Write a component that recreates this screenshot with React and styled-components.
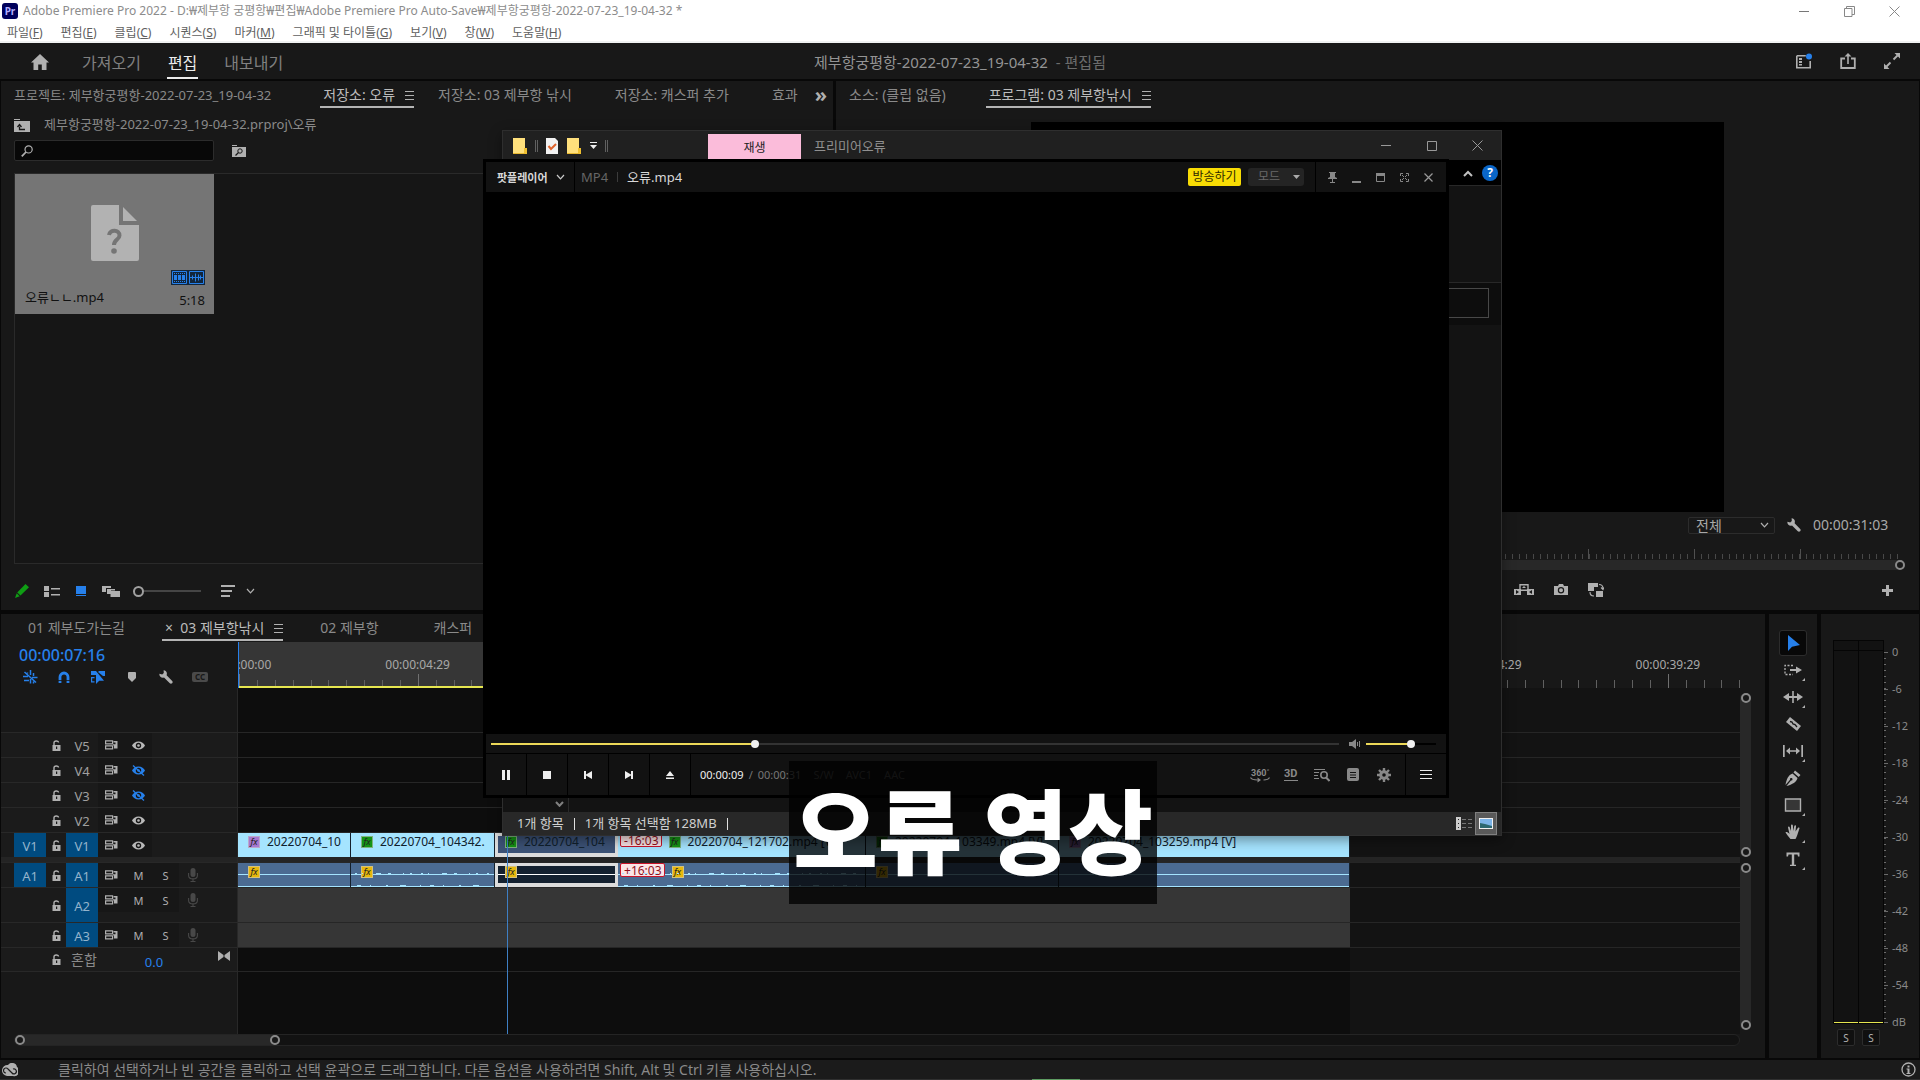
import React from 'react'
import styled, { createGlobalStyle, css } from 'styled-components'

const GlobalStyle = createGlobalStyle`
    * { box-sizing: border-box; }
    html, body { margin: 0; height: 100%; background: #080808; }
    #root { height: 100%; }
    body, button, input, select {
        font-family: "Noto Sans", "Noto Sans CJK KR", sans-serif;
    }
    button {
        margin: 0;
        padding: 0;
        border: 0;
        background: none;
        color: inherit;
        font-size: inherit;
    }
    h1, h2, p { margin: 0; font-weight: 400; }
    svg { display: block; flex: none; }
`

const Svg = ({ w = 16, h = 16, color = '#b0b0b0', children }) => (
    <svg width={w} height={h} viewBox={`0 0 ${w} ${h}`} fill={color} stroke="none" aria-hidden="true">
        {children}
    </svg>
)

/* ---------- icons ---------- */
const HomeIcon = () => (
    <Svg w={18} h={16}><path d="M9 0 0 8.5h2.5V16h4.7v-5.5h3.6V16h4.7V8.5H18z" /></Svg>
)
const WorkspaceIcon = () => (
    <Svg w={16} h={16}>
        <path d="M.8 2.8h9M.8 2.8v12h13.4V8" fill="none" stroke="#b0b0b0" strokeWidth="1.6" />
        <path d="M3 5h3v2H3zm0 3h3v2H3zm0 3h3v1.5H3z" />
        <circle cx="13" cy="3.5" r="3" fill="#2680eb" />
    </Svg>
)
const ShareIcon = () => (
    <Svg w={16} h={16}>
        <path d="M5 5.5H1.2V15h13.6V5.5H11" fill="none" stroke="#b0b0b0" strokeWidth="1.8" />
        <path d="M8 0l3.5 3.6H8.8V11H7.2V3.6H4.5z" />
    </Svg>
)
const FullIcon = () => (
    <Svg w={16} h={16}>
        <path d="M16 0v5.5L10.5 0zM0 16v-5.5L5.5 16z" />
        <path d="M13.5 2.5 9.5 6.5M6.5 9.5l-4 4" stroke="#b0b0b0" strokeWidth="1.8" />
    </Svg>
)
const MenuLines = () => (
    <Svg w={9} h={9}><path d="M0 0h9v1H0zm0 4h9v1H0zm0 4h9v1H0z" /></Svg>
)
const FolderUpIcon = () => (
    <Svg w={16} h={13}>
        <path d="M0 0h6v1H0zM0 2h16v11H0z" />
        <path d="M5.5 7.5V10.5H11M3.5 8 5.5 5.5 7.5 8" fill="none" stroke="#181818" strokeWidth="1.3" />
    </Svg>
)
const FolderFindIcon = () => (
    <Svg w={14} h={12}>
        <path d="M0 0h5v1H0zM0 2h14v10H0z" />
        <circle cx="8" cy="6" r="2.2" fill="none" stroke="#181818" />
        <path d="M6.5 7.5 3.5 10.5" stroke="#181818" strokeWidth="1.3" />
    </Svg>
)
const SearchIcon = () => (
    <Svg w={12} h={12}>
        <circle cx="7.6" cy="4.4" r="3.6" fill="none" stroke="#b0b0b0" strokeWidth="1.2" />
        <path d="M5 7 .8 11.4" stroke="#b0b0b0" strokeWidth="1.8" />
    </Svg>
)
const MissingFile = () => (
    <Svg w={48} h={56} color="#b2b2b2">
        <path d="M2 0h26v20h20v34a2 2 0 0 1-2 2H2a2 2 0 0 1-2-2V2a2 2 0 0 1 2-2z" />
        <path d="M32 2v14h14z" />
        <path d="M18 30c1-6 10.500-5.500 10.500.5 0 4.200-5.500 4-5.500 9.500" fill="none" stroke="#757575" strokeWidth="4" />
        <circle cx="23" cy="46" r="2.8" fill="#757575" />
    </Svg>
)
const FilmBadge = () => (
    <Svg w={17} h={15}>
        <path d="M0 0h17v15H0z" fill="#12263c" />
        <path d="M1.5 1.5h14v12h-14z" fill="none" stroke="#2680eb" />
        <path d="M3 5h3v5H3zm4 0h3v5H7zm4 0h3v5h-3z" fill="#2680eb" />
        <path d="M3 3.5h11M3 11.5h11" stroke="#2680eb" strokeDasharray="1 1" />
    </Svg>
)
const WaveBadge = () => (
    <Svg w={17} h={15}>
        <path d="M0 0h17v15H0z" fill="#12263c" />
        <path d="M1.5 1.5h14v12h-14z" fill="none" stroke="#2680eb" />
        <path d="M2 7.500h13M4.5 5.5v4M7.5 3.5v8M10.5 4.5v6M12.5 5.5v4" stroke="#2680eb" />
    </Svg>
)
const PencilIcon = () => (
    <Svg w={14} h={14} color="#0f9d14">
        <path d="M10.5 0 14 3.2 5.5 11.5 2.2 8.5zM1.7 9.3l3 3L0 14z" />
    </Svg>
)
const ListIcon = () => (
    <Svg w={16} h={11}><path d="M0 0h5v5H0zm0 6h5v5H0zM7 2h9v1.500H7zm0 6h9v1.500H7z" /></Svg>
)
const IconViewIcon = () => (
    <Svg w={12} h={11} color="#2680eb"><path d="M1 0h10v8H1zm0 9h10v1H1z" /></Svg>
)
const FreeformIcon = () => (
    <Svg w={18} h={11}>
        <path d="M0 0h9v2H4v4H0z" /><path d="M5 3h8v1.5H9V8H5z" /><path d="M8.5 5H18v6H8.5z" />
    </Svg>
)
const SortIcon = () => (
    <Svg w={14} h={12}><path d="M0 0h14v2H0zm0 5h11v2H0zm0 5h9v2H0z" /></Svg>
)
const Chevron = ({ color = '#b0b0b0', w = 9, sw = 1.2 }) => (
    <Svg w={w} h={6}><path d={`M1 1 ${w / 2} 4.8 ${w - 1} 1`} fill="none" stroke={color} strokeWidth={sw} /></Svg>
)
const WrenchIcon = () => (
    <Svg w={14} h={14}>
        <path d="M4.6.3 4.8 3 3.2 4.4.4 3.8C0 6.5 2.6 8.5 5 7.6L10.8 13.3c1.6 1.5 3.8-.8 2.4-2.3L7.6 5.2C8.6 2.5 7 .3 4.6.3z" />
    </Svg>
)
const NestIcon = () => (
    <Svg w={15} h={14} color="#2680eb">
        <path d="M1.500 2 13 12.500M0 6.500h5M9 7.500h5.500M1 10.500h5M7.5 0v5M4.500 2.500v1M10.5 3v3M7.5 9v4.500M10.500 11.500v2" fill="none" stroke="#2680eb" strokeWidth="1.500" />
    </Svg>
)
const SnapIcon = () => (
    <Svg w={12} h={12}>
        <path d="M2 12V6a4 4 0 0 1 8 0v6" fill="none" stroke="#2680eb" strokeWidth="2.800" />
        <path d="M0 9.500h4M8 9.500h4" stroke="#181818" strokeWidth=".8" />
    </Svg>
)
const LinkSelIcon = () => (
    <Svg w={15} h={13} color="#2680eb">
        <path d="M0 0h5v4H0zM8 0h6v5h-2L7 1zM0 6h3.500v1.200H1.200v3h2.300v1.200H0z" /><path d="M5 0v13l3.2-3.200H13z" />
    </Svg>
)
const MarkerIcon = () => (
    <Svg w={8} h={10}><path d="M0 1a1 1 0 0 1 1-1h6a1 1 0 0 1 1 1v5L4 10 0 6z" /></Svg>
)
const LockIcon = () => (
    <Svg w={9} h={11}>
        <path d="M2 5V2.800C2 .6 6.500.4 6.500 2.500" fill="none" stroke="#b0b0b0" strokeWidth="1.400" />
        <path d="M.5 5h8v6h-8z" /><path d="M4 6.500h1.200V9H4z" fill="#181818" />
    </Svg>
)
const SyncIcon = () => (
    <Svg w={13} h={10}>
        <path d="M.6.900h7v2.900h-7zM.6 5.900h7v2.900h-7z" fill="none" stroke="#b0b0b0" strokeWidth="1.200" />
        <path fillRule="evenodd" d="M8.500 1H12.500V8.500H9V5.500H8V4.300h2.500V2.500h-2z" />
    </Svg>
)
const EyeIcon = ({ off }) => {
    const c = off ? '#2680eb' : '#b8b8b8'
    return (
        <Svg w={13} h={11} color={c}>
            <path fillRule="evenodd" d="M6.5 1.5C3.5 1.5 1 3.5 0 5.5c1 2 3.5 4 6.5 4s5.5-2 6.5-4c-1-2-3.5-4-6.5-4zm0 1.3a2.7 2.7 0 1 1 0 5.4 2.7 2.7 0 0 1 0-5.4z" />
            <circle cx="6.5" cy="5.5" r="1.3" />
            {off && <path d="M1 .5l11 10" stroke={c} strokeWidth="1.3" />}
        </Svg>
    )
}
const MicIcon = () => (
    <Svg w={10} h={14} color="#484848">
        <rect x="2.5" y="0" width="5" height="9" rx="2.5" />
        <path d="M.6 5v2.5c0 4.5 8.8 4.500 8.800 0V5M5 11v2.500M2.500 13.500h5" fill="none" stroke="#484848" strokeWidth="1.100" />
    </Svg>
)
const KeyIcon = () => (
    <Svg w={12} h={10}><path d="M0 0l5.500 4v2L0 10zM12 0 6.500 4v2L12 10z" /></Svg>
)
const ExtractIcon = () => (
    <Svg w={20} h={12}>
        <path d="M6 5.500V.7h8v4.800" fill="none" stroke="#b0b0b0" strokeWidth="1.400" />
        <path d="M10 2l2 2H8zM7 5.500h6V7H7z" />
        <path fillRule="evenodd" d="M0 5h7v6H0zM2 6l3 2-3 2zM13 5h7v6h-7zM18 6l-3 2 3 2z" />
    </Svg>
)
const CameraIcon = () => (
    <Svg w={14} h={12}>
        <path fillRule="evenodd" d="M0 2h4l1-2h4l1 2h4v9H0zM7 3a3.200 3.200 0 1 0 0 6.400A3.200 3.200 0 0 0 7 3zm0 1.200a2 2 0 1 1 0 4 2 2 0 0 1 0-4z" />
    </Svg>
)
const CompareIcon = () => (
    <Svg w={16} h={14}>
        <path d="M0 0h10v4H6v4H0zM8 8h7v6H8z" />
        <path d="M11 1.500c3 0 4 1.500 4 4M13 4.500l2 2 1-2M6 13c-3 0-4-1-4-4" fill="none" stroke="#b0b0b0" strokeWidth="1.100" />
    </Svg>
)
const PlusIcon = () => <Svg w={11} h={11}><path d="M4 0h3v4h4v3H7v4H4V7H0V4h4z" /></Svg>

const toolDrawings = {
    '선택 도구': <path d="M5 2v16l4-4.200L17 12z" fill="#2680eb" />,
    '앞으로 트랙 선택': <><path d="M10 5.500H2v9h8" fill="none" stroke="#b0b0b0" strokeWidth="1.300" strokeDasharray="2 1.500" /><path d="M7 9h6V6.500l6 3.500-6 3.500V11H7z" /></>,
    '잔물결 편집': <><path d="M9.200 4h1.600v12H9.200zM0 10l6-4v3h8V6l6 4-6 4v-3H6v3z" /></>,
    '자르기 도구': <><path d="M7 3 18 12l-4 5L3 8z" /><path d="M7 7.500l2 .5 1 2 2 .5 2 2.500" fill="none" stroke="#181818" strokeWidth="1.300" /></>,
    '밀어넣기': <><path d="M0 4h1.700v12H0zM18.300 4H20v12h-1.700z" /><path d="M3 10l4-3.500V9.200h6V6.500l4 3.500-4 3.500v-2.700H7v2.700z" /></>,
    '펜 도구': <><path d="M12 2.500 17.500 7l-1.800 2L10.500 4.500zM9.500 5.500l5 4.500c-1 4-5 6.500-11 8L8 12.500a1.300 1.300 0 1 0-1-.8L2.500 17C3.500 11 5.500 7 9.500 5.500z" /></>,
    '사각형 도구': <path d="M2.500 4h15v12h-15z" fill="#363636" stroke="#b0b0b0" strokeWidth="1.400" />,
    '손 도구': <path d="M7.500 17C5.500 14.500 3.500 12 2.500 10.500c.8-1 2-.5 4 1.500L5 5.500c0-1.300 1.500-1.300 1.800 0L8 9V3.500c0-1.500 1.700-1.500 1.900 0L10.200 9l1.100-5c.4-1.200 1.900-1 1.700.4L12.500 9.500 14.800 6c.8-1 2-.3 1.600.8-.9 2.200-1.900 6.200-2.900 8.200L12.500 17z" />,
    '문자 도구': <path d="M3.500 3.500h13v4H15l-.5-2h-3.300v10.300H13V17H7v-1.200h1.800V5.500H5.500l-.5 2H3.500z" />,
}

/* ---------- shell ---------- */
const Shell = styled.div`
    position: relative;
    display: flex;
    flex-direction: column;
    height: 100vh;
    overflow: hidden;
    background: #080808;
    color: #8a8a8a;
    font-size: 14px;
    line-height: 20px;
    white-space: nowrap;
    cursor: default;
`
const TitleArea = styled.header`
    border-bottom: 2px solid #f0f2f2;
    background: #fff;
    color: #8c8c8c;
    font-size: 12px;
`
const TitleRow = styled.div`
    display: flex;
    align-items: center;
    justify-content: space-between;
    height: 22px;
    padding: 0 20px 0 2px;
`
const AppTitle = styled.div`
    display: flex;
    align-items: center;
    gap: 5px;
`
const PrBadge = styled.span`
    display: grid;
    place-items: center;
    width: 16px;
    height: 16px;
    border-radius: 3px;
    background: #00005b;
    color: #b3b0ff;
    font-size: 10px;
    font-weight: 700;
    line-height: 16px;
`
const WindowButtons = styled.div`
    display: flex;
    align-items: center;
    gap: ${p => p.$gap || 34}px;
`
const MenuBar = styled.nav`
    display: flex;
    gap: 18px;
    height: 19px;
    padding-left: 7px;
    color: #606060;
    line-height: 22px;
`
const HeaderBar = styled.div`
    display: grid;
    grid-template-columns: 1fr auto 1fr;
    align-items: stretch;
    height: 38px;
    padding: 0 20px;
    border-bottom: 2px solid #080808;
    background: #181818;
`
const ModeTabs = styled.div`
    display: flex;
    align-items: stretch;
    gap: 25px;
`
const HomeButton = styled.button`
    margin: 2px 7px 0 11px;
`
const ModeTab = styled.button`
    padding: 3px 1px 0;
    border-bottom: 2px solid ${p => (p.$on ? '#ececec' : 'transparent')};
    color: ${p => (p.$on ? '#ececec' : '#808080')};
    font-size: 16px;
`
const DocName = styled.h1`
    display: flex;
    align-items: center;
    gap: 8px;
    padding-top: 2px;
    font-size: 15px;
    color: #949494;
    span { color: #6c6c6c; }
`
const HeaderTools = styled.div`
    display: flex;
    align-items: center;
    justify-content: flex-end;
    gap: 28px;
`
const Work = styled.main`
    flex: 1;
    min-height: 0;
    display: grid;
    grid-template-rows: minmax(0, 529fr) minmax(0, 444fr);
    gap: 4px;
    padding: 0 1px;
`
const TopRow = styled.div`
    display: grid;
    grid-template-columns: minmax(0, 832fr) minmax(0, 1083fr);
    gap: 3px;
    min-height: 0;
`
const BottomRow = styled.div`
    display: grid;
    grid-template-columns: minmax(0, 1fr) 48px 98px;
    gap: 4px;
    min-height: 0;
`
const Panel = styled.section`
    display: flex;
    flex-direction: column;
    min-width: 0;
    min-height: 0;
    overflow: hidden;
    background: #181818;
`
const TabStrip = styled.div`
    display: flex;
    flex: none;
    align-items: stretch;
    gap: ${p => p.$gap || 40}px;
    height: 27px;
    padding-left: ${p => p.$pad || 13}px;
`
const Tab = styled.button`
    display: flex;
    align-items: center;
    gap: 10px;
    margin-left: ${p => p.$shift || 0}px;
    padding: 3px ${p => (p.$compact ? 6 : 0)}px 0 ${p => (p.$on ? 3 : 0)}px;
    border-bottom: 2px solid ${p => (p.$on ? '#b4b4b4' : 'transparent')};
    color: ${p => (p.$on ? '#bcbcbc' : '#8a8a8a')};
    font-size: ${p => (p.$compact ? 13 : 14)}px;
    line-height: 22px;
`
const More = styled.button`
    margin-left: -26px;
    font-size: 20px;
    font-weight: 700;
    line-height: 16px;
    color: #b0b0b0;
`

/* ---------- project panel ---------- */
const Crumb = styled.div`
    display: flex;
    align-items: center;
    gap: 14px;
    height: 32px;
    padding: 0 13px;
    font-size: 13px;
    > svg { margin-top: 3px; }
`
const SearchRow = styled.div`
    display: flex;
    align-items: center;
    gap: 18px;
    padding: 0 13px;
`
const SearchBox = styled.label`
    display: flex;
    align-items: center;
    gap: 6px;
    width: 200px;
    height: 21px;
    padding-left: 6px;
    border: 1px solid #2c2c2c;
    border-radius: 2px;
    background: #080808;
    input {
        min-width: 0;
        flex: 1;
        border: 0;
        outline: 0;
        background: none;
        color: #b0b0b0;
    }
`
const Bin = styled.div`
    flex: 1;
    margin: 12px 0 0 13px;
    border: 1px solid #2a2a2a;
    border-right: 0;
    background: #161616;
`
const Asset = styled.figure`
    display: flex;
    flex-direction: column;
    justify-content: space-between;
    width: 199px;
    height: 140px;
    margin: 0;
    padding: 31px 9px 5px 9px;
    background: #757575;
    color: #111;
    font-size: 13px;
    > svg { align-self: center; }
`
const AssetInfo = styled.figcaption`
    display: flex;
    align-items: flex-end;
    justify-content: space-between;
    > span { padding: 0 0 2px 1px; }
`
const AssetMeta = styled.div`
    display: flex;
    flex-direction: column;
    align-items: flex-end;
    gap: 6px;
    line-height: 18px;
    div { display: flex; }
`
const BinTools = styled.div`
    display: flex;
    align-items: center;
    gap: 15px;
    height: 46px;
    padding: 8px 0 0 14px;
`
const SortButton = styled.button`
    display: flex;
    align-items: center;
    gap: 11px;
`
const Zoom = styled.input`
    appearance: none;
    width: 68px;
    height: 12px;
    margin: 0 5px 0 -2px;
    background: linear-gradient(#454545, #454545) center / 100% 2px no-repeat;
    &::-webkit-slider-thumb {
        appearance: none;
        width: 11px;
        height: 11px;
        border: 2px solid #a0a0a0;
        border-radius: 50%;
        background: #181818;
    }
`

/* ---------- program monitor ---------- */
const Stage = styled.div`
    flex: 1;
    min-height: 0;
    display: flex;
    justify-content: center;
    padding-top: 14px;
`
const Screen = styled.div`
    height: 100%;
    aspect-ratio: 16 / 9;
    background: #000;
`
const MonitorInfo = styled.div`
    display: flex;
    align-items: center;
    justify-content: flex-end;
    gap: 12px;
    height: 26px;
    padding-right: 30px;
    color: #a8a8a8;
    time { width: 76px; }
`
const ZoomSelect = styled.div`
    display: flex;
    align-items: center;
    width: 87px;
    height: 17px;
    padding-right: 5px;
    border: 1px solid #2c2c2c;
    border-radius: 2px;
    select {
        appearance: none;
        flex: 1;
        border: 0;
        padding: 0 0 0 7px;
        background: none;
        color: #a8a8a8;
        font-size: 14px;
        line-height: 15px;
    }
`
const MiniRuler = styled.div`
    height: 12px;
    margin: 9px 19px 0 16px;
    background:
        linear-gradient(90deg, #505050 1px, transparent 1px) 100px 100% / 106px 10px repeat-x,
        linear-gradient(90deg, #484848 1px, transparent 1px) 2px 100% / 7px 5px repeat-x;
`
const ScrollTrack = styled.div`
    display: flex;
    align-items: center;
    justify-content: space-between;
    flex-direction: ${p => (p.$vertical ? 'column' : 'row')};
    border-radius: 6px;
    background: #282828;
`
const MonitorScroll = styled(ScrollTrack)`
    height: 10px;
    margin: 1px 14px 0 16px;
`
const Knob = styled.i`
    flex: none;
    width: 10px;
    height: 10px;
    border: 2px solid #8a8a8a;
    border-radius: 50%;
    background: #181818;
`
const MonitorTools = styled.div`
    display: flex;
    align-items: center;
    justify-content: flex-end;
    gap: 20px;
    height: 40px;
    padding-right: 26px;
    button:last-child { margin-left: 258px; }
`

/* ---------- timeline ---------- */
const SequenceBody = styled.div`
    flex: 1;
    min-height: 0;
    display: grid;
    grid-template-columns: 237px minmax(0, 1fr) 12px 13px;
    grid-template-rows: 47px minmax(0, 1fr) 12px;
    padding-bottom: 12px;
`
const SequenceHead = styled.div`
    padding-left: 18px;
`
const Timecode = styled.div`
    height: 26px;
    color: #2680eb;
    font-size: 16px;
    font-weight: 500;
    line-height: 28px;
`
const HeadTools = styled.div`
    display: grid;
    grid-template-columns: repeat(6, 34px);
    align-items: center;
    margin-left: -6px;
    height: 20px;
    button { display: grid; place-items: center; }
`
const CcIcon = styled.span`
    width: 16px;
    border-radius: 2px;
    background: #4a4a4a;
    color: #181818;
    font-size: 8px;
    font-weight: 700;
    line-height: 10px;
`
const Ruler = styled.div`
    position: relative;
    display: flex;
    overflow: hidden;
    margin-top: 1px;
    border-left: 1px solid #2680eb;
    background: linear-gradient(#363636, #363636) 0 0 / 1111px 100% no-repeat;
    &::after {
        content: '';
        position: absolute;
        inset: auto auto 0 0;
        width: 1111px;
        height: 2px;
        background: #e6e650;
    }
`
const Major = styled.div`
    flex: 0 0 11.9%;
    background:
        linear-gradient(#707070, #707070) 0 100% / 1px 14px no-repeat,
        repeating-linear-gradient(90deg, #606060 0 1px, transparent 1px 10%) 0 100% / 100% 8px no-repeat;
    span {
        display: block;
        width: max-content;
        margin-top: 13px;
        transform: translateX(-50%);
        color: #a8a8a8;
        font-size: 12px;
    }
`
const TrackHeads = styled.div`
    padding-top: 44px;
    border-right: 1px solid #282828;
    overflow: hidden;
`
const TrackHead = styled.div`
    display: grid;
    grid-template-columns: 32px 20px 32px 27px 27px 27px 27px 1fr;
    align-items: start;
    height: ${p => p.$h || 25}px;
    padding-left: 13px;
    border-top: 1px solid #282828;
    background: #1b1b1b;
    font-size: 12px;
    color: #a0a0a0;
    > * { height: 24px; }
`
const Center = styled.div`
    display: grid;
    place-items: center;
    ${p => p.$fill && css`height: 100% !important;`}
`
const Patch = styled.button`
    height: 100% !important;
    padding-top: 2px;
    ${p => p.$on && css`background: #004b80; color: #94b4cc;`}
    font-size: 13px;
`
const Flat = styled.button`
    display: grid;
    place-items: center;
    background: #171717;
    color: #b0b0b0;
    font-size: 11px;
`
const Splitter = styled.div`
    height: 5px;
    background: #242424;
`
const MixHead = styled.div`
    display: flex;
    align-items: center;
    height: 25px;
    padding: 0 7px 0 51px;
    border-top: 1px solid #282828;
    border-bottom: 1px solid #282828;
    background: #1b1b1b;
    gap: 10px;
    output { margin: 4px 0 0 38px; color: #2680eb; font-size: 13px; }
    > svg:last-child { margin: -8px 0 0 auto; }
`
const Lanes = styled.div`
    position: relative;
    overflow: hidden;
    padding-top: 44px;
    background: linear-gradient(#0d0d0d, #0d0d0d) 0 0 / 1112px 100% no-repeat #131313;
`
const Lane = styled.div`
    display: flex;
    height: ${p => p.$h || 25}px;
    border-top: 1px solid #262626;
    ${p => p.$filled && css`background: linear-gradient(#363636, #363636) 0 0 / 1112px 100% no-repeat;`}
    ${p => p.$last && css`border-bottom: 1px solid #262626;`}
`
const Clip = styled.div`
    position: relative;
    display: flex;
    align-items: flex-start;
    gap: 7px;
    flex: none;
    overflow: hidden;
    height: 24px;
    padding: 3px 2px 0 10px;
    border-right: 1px solid #14202c;
    background: ${p => (p.$audio ? '#4b6b92' : '#a5e4ff')};
    color: #10202c;
    font-size: 12px;
    line-height: 12px;
    ${p => p.$audio && css`
        background: linear-gradient(#a5e4ff, #a5e4ff) 0 11px / 100% 1px no-repeat,
            linear-gradient(#a5e4ff, #a5e4ff) 0 100% / 100% 1px no-repeat, #4b6b92;
    `}
    ${p => p.$selected && css`
        padding: 0 1px 0 7px;
        border: solid #dcdcdc;
        border-width: 3px 3px 4px;
        background: ${p.$audio ? 'linear-gradient(#fff, #fff) 0 8px / 100% 1px no-repeat, #142130' : '#3c5276'};
    `}
    > svg:last-child { position: absolute; left: 0; bottom: 0; }
`
const Fx = styled.span`
    flex: none;
    width: 12px;
    height: 12px;
    border: 1px solid rgba(200, 200, 200, 0.6);
    background: ${p => p.$color};
    color: #222;
    font-size: 9px;
    font-style: italic;
    line-height: 10px;
    text-align: center;
`
const Drift = styled.span`
    height: 14px;
    margin: -3px 0 0 -8px;
    padding: 0 2px 0 3px;
    border: 1px solid #c8142a;
    border-radius: 2px;
    background: #fbe4e6;
    color: #90101c;
    line-height: 14px;
`
const Playhead = styled.div`
    position: absolute;
    top: 0;
    bottom: 0;
    left: 269px;
    width: 1px;
    background: #3e7fc4;
`
const VScrolls = styled.div`
    display: flex;
    flex-direction: column;
    gap: 6px;
    padding: 5px 0 4px;
`
const VScroll = styled(ScrollTrack)`
    width: 11px;
    height: ${p => p.$h}px;
    flex: ${p => (p.$h ? 'none' : 1)};
`
const HScroll = styled.div`
    grid-column: 1 / 3;
    height: 12px;
    margin-left: 13px;
    border: 1px solid #242424;
    border-radius: 6px;
    background: #121212;
`
const HThumb = styled(ScrollTrack)`
    width: 265px;
    height: 10px;
`

/* ---------- tools & meters ---------- */
const Tools = styled(Panel)`
    align-items: center;
    gap: 1px;
    padding-top: 16px;
`
const Tool = styled.button`
    position: relative;
    display: grid;
    place-items: center;
    width: 28px;
    height: 26px;
    border-radius: 3px;
    ${p => p.$on && css`background: #080808; box-shadow: inset 0 0 0 1px #2c2c2c;`}
    ${p => p.$more && css`
        &::after {
            content: '';
            position: absolute;
            right: 2px;
            bottom: 2px;
            border-left: 3px solid transparent;
            border-bottom: 3px solid #b0b0b0;
        }
    `}
`
const MeterPanel = styled(Panel)`
    padding: 26px 0 12px 12px;
    font-size: 11px;
`
const MeterBody = styled.div`
    flex: 1;
    display: flex;
`
const Bars = styled.div`
    display: grid;
    grid-template-columns: 1fr 1fr;
    grid-template-rows: 9px 1fr;
    gap: 1px;
    width: 51px;
    padding: 1px;
    background: #050505;
    i { background: #121212; }
    i:nth-child(n + 3) { border-bottom: 1px solid #e6e650; }
`
const Scale = styled.ol`
    display: flex;
    flex-direction: column;
    justify-content: space-between;
    flex: 1;
    margin: 3px 0 -7px;
    padding: 0;
    list-style: none;
    color: #8a8a8a;
    background: repeating-linear-gradient(#6a6a6a 0 1px, transparent 1px 6px) 0 9px / 2px calc(100% - 18px) no-repeat;
    li {
        display: flex;
        align-items: center;
        gap: 4px;
        height: 18px;
    }
    li::before { content: ''; width: 4px; height: 1px; background: #6a6a6a; }
`
const Solos = styled.div`
    display: flex;
    gap: 7px;
    margin: 5px 0 0 4px;
    button {
        width: 18px;
        height: 17px;
        border: 1px solid #2c2c2c;
        border-radius: 2px;
        background: #101010;
        color: #b0b0b0;
        font-size: 10px;
        line-height: 14px;
    }
`
const StatusBar = styled.footer`
    display: flex;
    align-items: center;
    justify-content: space-between;
    height: 20px;
    margin-top: 2px;
    padding: 0 4px 0 2px;
    border-bottom: 1px solid #303030;
    background: #1b1b1b;
    div { display: flex; align-items: center; gap: 40px; }
`

/* ---------- floating windows ---------- */
const ExplorerWindow = styled.section`
    position: absolute;
    left: 502px;
    top: 130px;
    display: flex;
    flex-direction: column;
    width: 1000px;
    height: 706px;
    border: 1px solid #2e2e2e;
    background: #131313;
    box-shadow: 0 4px 12px rgba(0, 0, 0, 0.4);
    color: #d0d0d0;
    font-size: 13px;
`
const ExplorerTitle = styled.header`
    display: grid;
    grid-template-columns: 195px 93px 1fr auto;
    align-items: center;
    height: 29px;
    padding-left: 10px;
    background: #202020;
    color: #909090;
    h2 { padding-left: 13px; font-size: 13px; }
    ${WindowButtons} { padding-right: 18px; }
`
const QuickTools = styled.div`
    display: flex;
    align-items: center;
    gap: 9px;
`
const QuickSep = styled.i`
    width: 3px;
    height: 12px;
    margin: 0 -1px;
    border: solid #606060;
    border-width: 0 1px;
`
const PlayTab = styled.button`
    align-self: end;
    height: 26px;
    background: #fbbcda;
    color: #222;
    font-size: 12px;
`
const RibbonTabs = styled.div`
    display: flex;
    align-items: center;
    justify-content: flex-end;
    gap: 8px;
    height: 26px;
    padding-right: 3px;
    border-bottom: 1px solid #282828;
    background: #000;
`
const HelpButton = styled.button`
    width: 16px;
    height: 16px;
    border-radius: 50%;
    background: #0a66c8;
    color: #fff;
    font-size: 12px;
    font-weight: 700;
    line-height: 16px;
`
const Ribbon = styled.div`
    height: 97px;
    border-bottom: 1px solid #282828;
`
const AddressRow = styled.div`
    height: 42px;
    padding: 5px 12px 7px;
    background: #0d0d0d;
    input {
        display: block;
        width: 100%;
        height: 30px;
        border: 1px solid #484848;
        background: #0d0d0d;
    }
`
const ExplorerBody = styled.div`
    flex: 1;
    display: flex;
    align-items: flex-end;
    justify-content: flex-end;
    width: 66px;
    padding: 0 4px 5px 0;
    border-right: 1px solid #2a2a2a;
`
const ExplorerStatus = styled.footer`
    display: flex;
    align-items: center;
    gap: 10px;
    height: 23px;
    padding: 0 4px 0 14px;
    background: #282828;
    line-height: 18px;
    > span { height: 20px; }
    > i { width: 1px; height: 12px; background: #e0e0e0; }
`
const ViewSwitch = styled.div`
    display: flex;
    align-items: center;
    gap: 3px;
    margin-left: auto;
    button:last-child {
        display: grid;
        place-items: center;
        width: 22px;
        height: 23px;
        border: 1px solid #808080;
        background: #5a5a5a;
    }
`
const PlayerWindow = styled.section`
    position: absolute;
    left: 483px;
    top: 159px;
    display: flex;
    flex-direction: column;
    width: 966px;
    height: 639px;
    border: 3px solid #000;
    background: #000;
    color: #d8d8d8;
    font-size: 13px;
`
const PlayerTitle = styled.header`
    display: flex;
    align-items: center;
    height: 30px;
    background: #121212;
`
const PlayerMenu = styled.button`
    display: flex;
    align-items: center;
    justify-content: space-between;
    width: 89px;
    height: 30px;
    padding: 0 9px 0 11px;
    border-right: 1px solid #000;
    font-size: 11px;
    font-weight: 700;
`
const FileName = styled.div`
    display: flex;
    align-items: center;
    gap: 9px;
    flex: 1;
    padding-left: 6px;
    span { color: #666; }
    i { width: 1px; height: 10px; background: #3c3c3c; }
`
const LiveButton = styled.button`
    width: 53px;
    height: 18px;
    border-radius: 2px;
    background: #f8dc04;
    color: #2c2800;
    font-size: 12px;
    line-height: 18px;
`
const ModeSelect = styled.label`
    display: flex;
    align-items: center;
    width: 56px;
    height: 18px;
    margin: 0 11px 0 7px;
    padding-right: 4px;
    border-radius: 3px;
    background: #242424;
    select {
        appearance: none;
        flex: 1;
        min-width: 0;
        padding: 0 0 0 10px;
        border: 0;
        background: none;
        color: #6a6a6a;
        font-size: 12px;
        line-height: 18px;
    }
`
const PlayerButtons = styled.div`
    display: flex;
    align-items: center;
    justify-content: space-between;
    width: 131px;
    height: 30px;
    padding: 0 13px 0 12px;
    border-left: 1px solid #000;
`
const Video = styled.div`
    flex: 1;
    background: #000;
`
const SeekRow = styled.div`
    display: flex;
    align-items: center;
    height: 20px;
    padding: 0 10px 0 5px;
    border-bottom: 1px solid #000;
    background: #121212;
    svg { margin: 0 6px 0 10px; }
`
const Slider = styled.input`
    appearance: none;
    height: 10px;
    margin: 0;
    min-width: 0;
    flex: ${p => (p.$w ? `0 0 ${p.$w}px` : 1)};
    background: linear-gradient(90deg, #ecd858 ${p => p.value}%, ${p => p.$rest} ${p => p.value}%) center / 100% 2px no-repeat;
    &::-webkit-slider-thumb {
        appearance: none;
        width: 8px;
        height: 8px;
        border-radius: 50%;
        background: #f0f0f0;
    }
`
const Controls = styled.div`
    display: flex;
    align-items: center;
    height: 41px;
    background: #121212;
`
const ControlButton = styled.button`
    display: grid;
    place-items: center;
    width: 41px;
    height: 41px;
    border-right: 1px solid #000;
`
const PlayTime = styled.div`
    display: flex;
    flex: 1;
    gap: 5px;
    padding-left: 9px;
    font-size: 11px;
    color: #eee;
    span { color: #777; }
    small { margin-left: 7px; font-size: 11px; color: #555; }
`
const ExtraTools = styled.div`
    display: grid;
    grid-template-columns: repeat(5, 31px);
    place-items: center;
    padding-right: 6px;
`
const MenuButton = styled(ControlButton)`
    border-right: 0;
    border-left: 1px solid #000;
`
const Subtitle = styled.p`
    position: absolute;
    left: 789px;
    top: 761px;
    width: 368px;
    height: 143px;
    background: rgba(0, 0, 0, 0.78);
    color: #fff;
    font-family: "Noto Sans CJK KR", sans-serif;
    font-size: 92px;
    font-weight: 900;
    line-height: 132px;
    text-align: center;
`
const TaskbarPeek = styled.i`
    position: absolute;
    left: 1032px;
    bottom: 0;
    width: 48px;
    height: 1px;
    background: #5e9c62;
`

const MinIcon = ({ c = '#777' }) => <Svg w={11} h={11}><path d="M0 5.500h10" stroke={c} /></Svg>
const MaxIcon = () => <Svg w={10} h={10}><path d="M.5.5h9v9h-9z" fill="none" stroke="#999" /></Svg>
const CloseIcon = ({ c = '#888' }) => <Svg w={11} h={11}><path d="M.5.5l10 10M10.5.5l-10 10" stroke={c} fill="none" /></Svg>
const RestoreIcon = () => (
    <Svg w={11} h={11}><path d="M.5 2.500h7.500v8H.5zM2.500 2.500v-2h8v8H8" fill="none" stroke="#888" /></Svg>
)
const FolderIcon = () => (
    <Svg w={14} h={16}><path d="M0 0h12v16H0z" fill="#ffe07c" /><path d="M11 10h3v6h-3z" fill="#f0c030" /><path d="M0 15h12v1H0z" fill="#e8b830" /></Svg>
)
const DocIcon = () => (
    <Svg w={12} h={16}><path d="M0 0h9l3 3v13H0z" fill="#f2f2f2" /><path d="M2.500 8l2.500 3 5-5" fill="none" stroke="#e0642c" strokeWidth="2" /></Svg>
)

/* ---------- data ---------- */
const menus = [['파일', 'F'], ['편집', 'E'], ['클립', 'C'], ['시퀀스', 'S'], ['마커', 'M'], ['그래픽 및 타이틀', 'G'], ['보기', 'V'], ['창', 'W'], ['도움말', 'H']]

const videoTracks = [
    { name: 'V5' }, { name: 'V4', hidden: true }, { name: 'V3', hidden: true }, { name: 'V2' }, { name: 'V1', patch: 'V1' },
]
const audioTracks = [
    { name: 'A1', patch: 'A1', h: 25 }, { name: 'A2', h: 35 }, { name: 'A3', h: 25 },
]
const clips = [
    { name: '20220704_10', len: 113, fx: '#a678d0' },
    { name: '20220704_104342.', len: 144, fx: '#149414', wave: true },
    { name: '20220704_104', len: 123, fx: '#149414', selected: true },
    { name: '20220704_121702.mp4 [V]', len: 248, fx: '#149414', drift: '16:03', wave: true },
    { name: '20220704_103349.mp4 [V]', len: 193, fx: '#149414' },
    { name: '20220704_103259.mp4 [V]', len: 291, fx: '#a678d0', noFx: true },
]
const rulerMarks = ['00:00:00:00', '00:00:04:29', '00:00:09:29', '00:00:14:29', '00:00:19:29', '00:00:24:29', '00:00:29:29', '00:00:34:29', '00:00:39:29']
const levels = ['0', '-6', '-12', '-18', '-24', '-30', '-36', '-42', '-48', '-54', 'dB']

const Wave = ({ w }) => (
    <svg width={w} height="24" viewBox={`0 0 ${w} 24`} aria-hidden="true">
        <path d={`M4 10.5H${w - 6}`} stroke="#a5e4ff" strokeDasharray="2 5 1 13 5 7 3 12 1 6 2 9" />
        <path d={`M6 22.5H${w - 6}`} stroke="#a5e4ff" strokeDasharray="4 9 1 15 2 12 6 14 1 9" />
    </svg>
)

const ProjectPanel = () => (
    <Panel>
        <TabStrip $gap={43}>
            <Tab $compact>프로젝트: 제부항궁평항-2022-07-23_19-04-32</Tab>
            <Tab $on>저장소: 오류 <MenuLines /></Tab>
            <Tab $shift={-19}>저장소: 03 제부항 낚시</Tab>
            <Tab>저장소: 캐스퍼 추가</Tab>
            <Tab>효과</Tab>
            <More aria-label="더 보기">»</More>
        </TabStrip>
        <Crumb><FolderUpIcon />제부항궁평항-2022-07-23_19-04-32.prproj\오류</Crumb>
        <SearchRow>
            <SearchBox aria-label="검색"><SearchIcon /><input type="text" /></SearchBox>
            <button aria-label="검색 저장소"><FolderFindIcon /></button>
        </SearchRow>
        <Bin>
            <Asset>
                <MissingFile />
                <AssetInfo>
                    <span>오류ㄴㄴ.mp4</span>
                    <AssetMeta><div><FilmBadge /><WaveBadge /></div>5:18</AssetMeta>
                </AssetInfo>
            </Asset>
        </Bin>
        <BinTools>
            <button aria-label="쓰기 가능"><PencilIcon /></button>
            <button aria-label="목록 보기"><ListIcon /></button>
            <button aria-label="아이콘 보기"><IconViewIcon /></button>
            <button aria-label="자유형 보기"><FreeformIcon /></button>
            <Zoom type="range" defaultValue="0" aria-label="축소판 크기" />
            <SortButton aria-label="정렬"><SortIcon /><Chevron /></SortButton>
        </BinTools>
    </Panel>
)

const ProgramPanel = () => (
    <Panel>
        <TabStrip>
            <Tab>소스: (클립 없음)</Tab>
            <Tab $on>프로그램: 03 제부항낚시 <MenuLines /></Tab>
        </TabStrip>
        <Stage><Screen /></Stage>
        <MonitorInfo>
            <ZoomSelect>
                <select aria-label="확대/축소 레벨"><option>전체</option></select>
                <Chevron />
            </ZoomSelect>
            <WrenchIcon />
            <time>00:00:31:03</time>
        </MonitorInfo>
        <MiniRuler />
        <MonitorScroll><Knob /><Knob /></MonitorScroll>
        <MonitorTools>
            <button aria-label="추출"><ExtractIcon /></button>
            <button aria-label="프레임 내보내기"><CameraIcon /></button>
            <button aria-label="비교 보기"><CompareIcon /></button>
            <button aria-label="단추 편집기"><PlusIcon /></button>
        </MonitorTools>
    </Panel>
)

const TrackControls = ({ track, audio }) => (
    <TrackHead $h={track.h}>
        {track.patch ? <Patch $on>{track.patch}</Patch> : <span />}
        <Center $fill><LockIcon /></Center>
        <Patch $on={audio || track.patch}>{track.name}</Patch>
        <Flat aria-label="동기화 잠금"><SyncIcon /></Flat>
        {audio ? (
            <>
                <Flat>M</Flat>
                <Flat>S</Flat>
                <Center><MicIcon /></Center>
            </>
        ) : (
            <Flat aria-label="트랙 출력"><EyeIcon off={track.hidden} /></Flat>
        )}
    </TrackHead>
)

const TimelinePanel = () => (
    <Panel>
        <TabStrip $pad={27} $gap={37}>
            <Tab>01 제부도가는길</Tab>
            <Tab $on>×&nbsp; 03 제부항낚시 <MenuLines /></Tab>
            <Tab>02 제부항</Tab>
            <Tab $shift={18}>캐스퍼</Tab>
        </TabStrip>
        <SequenceBody>
            <SequenceHead>
                <Timecode>00:00:07:16</Timecode>
                <HeadTools>
                    <button aria-label="중첩"><NestIcon /></button>
                    <button aria-label="스냅"><SnapIcon /></button>
                    <button aria-label="연결된 선택"><LinkSelIcon /></button>
                    <button aria-label="마커 추가"><MarkerIcon /></button>
                    <button aria-label="설정"><WrenchIcon /></button>
                    <button><CcIcon>CC</CcIcon></button>
                </HeadTools>
            </SequenceHead>
            <Ruler>
                {rulerMarks.map(mark => <Major key={mark}><span>{mark}</span></Major>)}
            </Ruler>
            <span />
            <span />
            <TrackHeads>
                {videoTracks.map(t => <TrackControls key={t.name} track={t} />)}
                <Splitter />
                {audioTracks.map(t => <TrackControls key={t.name} track={t} audio />)}
                <MixHead><LockIcon />혼합<output>0.0</output><KeyIcon /></MixHead>
            </TrackHeads>
            <Lanes>
                <Lane /><Lane /><Lane /><Lane />
                <Lane>
                    {clips.map(c => (
                        <Clip key={c.name} $selected={c.selected} style={{ width: c.len }}>
                            {c.drift && <Drift>-{c.drift}</Drift>}
                            <Fx $color={c.fx}>fx</Fx>{c.name}
                        </Clip>
                    ))}
                </Lane>
                <Splitter />
                <Lane>
                    {clips.map(c => (
                        <Clip key={c.name} $audio $selected={c.selected} style={{ width: c.len }}>
                            {c.drift && <Drift>+{c.drift}</Drift>}
                            {!c.noFx && <Fx $color="#e8b80c">fx</Fx>}
                            {c.wave && <Wave w={c.len} />}
                        </Clip>
                    ))}
                </Lane>
                <Lane $h={35} $filled />
                <Lane $filled />
                <Lane $last />
                <Playhead />
            </Lanes>
            <VScrolls>
                <VScroll $vertical $h={164}><Knob /><Knob /></VScroll>
                <VScroll $vertical><Knob /><Knob /></VScroll>
            </VScrolls>
            <span />
            <HScroll><HThumb><Knob /><Knob /></HThumb></HScroll>
        </SequenceBody>
    </Panel>
)

const noMore = ['선택 도구', '자르기 도구', '펜 도구']

const ToolsPanel = () => (
    <Tools>
        {Object.keys(toolDrawings).map((name, i) => (
            <Tool key={name} aria-label={name} $on={i === 0} $more={!noMore.includes(name)}>
                <Svg w={20} h={20}>{toolDrawings[name]}</Svg>
            </Tool>
        ))}
    </Tools>
)

const Meters = () => (
    <MeterPanel>
        <MeterBody>
            <Bars><i /><i /><i /><i /></Bars>
            <Scale>{levels.map(l => <li key={l}>{l}</li>)}</Scale>
        </MeterBody>
        <Solos><button>S</button><button>S</button></Solos>
    </MeterPanel>
)

const Explorer = () => (
    <ExplorerWindow>
        <ExplorerTitle>
            <QuickTools>
                <FolderIcon /><QuickSep /><DocIcon /><FolderIcon />
                <Svg w={7} h={7}><path d="M0 0h7v1H0zM0 3h7L3.500 7z" fill="#eee" /></Svg>
                <QuickSep />
            </QuickTools>
            <PlayTab>재생</PlayTab>
            <h2>프리미어오류</h2>
            <WindowButtons $gap={35}>
                <button aria-label="최소화"><MinIcon c="#999" /></button>
                <button aria-label="최대화"><MaxIcon /></button>
                <button aria-label="닫기"><CloseIcon c="#999" /></button>
            </WindowButtons>
        </ExplorerTitle>
        <RibbonTabs>
            <Svg w={12} h={8}><path d="M2 7l4-4 4 4" fill="none" stroke="#c0c0c0" strokeWidth="2" /></Svg>
            <HelpButton>?</HelpButton>
        </RibbonTabs>
        <Ribbon />
        <AddressRow><input type="text" aria-label="주소" /></AddressRow>
        <ExplorerBody><Chevron color="#808080" sw={2} /></ExplorerBody>
        <ExplorerStatus>
            <span>1개 항목</span><i /><span>1개 항목 선택함 128MB</span><i />
            <ViewSwitch>
                <button aria-label="자세히">
                    <Svg w={16} h={13}>
                        <path d="M0 0h5v13H0z" fill="#ccc" /><path d="M2 2h1v1H2zm0 4h1v1H2zm0 4h1v1H2z" fill="#222" />
                        <path d="M6 2.500h10M6 6.500h10M6 10.500h10" stroke="#777" strokeDasharray="4 2" />
                    </Svg>
                </button>
                <button aria-label="큰 아이콘">
                    <Svg w={14} h={11}>
                        <path d="M0 0h14v11H0z" fill="#f0f0f0" /><path d="M1 1h12v9H1z" fill="#7cb4e8" /><path d="M1 5l5 1 7 2v2H1z" fill="#2c6870" />
                    </Svg>
                </button>
            </ViewSwitch>
        </ExplorerStatus>
    </ExplorerWindow>
)

const Player = () => (
    <PlayerWindow>
        <PlayerTitle>
            <PlayerMenu>팟플레이어<Chevron color="#ccc" /></PlayerMenu>
            <FileName><span>MP4</span><i />오류.mp4</FileName>
            <LiveButton>방송하기</LiveButton>
            <ModeSelect>
                <select aria-label="모드"><option>모드</option></select>
                <Svg w={7} h={4}><path d="M0 0h7L3.500 4z" fill="#aaa" /></Svg>
            </ModeSelect>
            <PlayerButtons>
                <button aria-label="항상 위"><Svg w={9} h={11} color="#888"><path d="M1 0h7v1H7v4l2 1v1H5v3h2v1H2v-1h2V7H0V6l2-1V1H1z" /></Svg></button>
                <button aria-label="최소화"><Svg w={9} h={11}><path d="M0 9h9v2H0z" fill="#888" /></Svg></button>
                <button aria-label="최대화"><Svg w={9} h={9}><path d="M.5.5h8v8h-8z" fill="none" stroke="#888" /><path d="M0 0h9v3H0z" fill="#888" /></Svg></button>
                <button aria-label="전체 화면"><Svg w={9} h={9}><path d="M.5 3V.5H3M6 .5h2.500V3M8.500 6v2.500H6M3 8.500H.5V6M2 2l2 2M7 2 5 4M2 7l2-2M7 7 5 5" fill="none" stroke="#888" /></Svg></button>
                <button aria-label="닫기"><Svg w={9} h={9}><path d="M.5.5l8 8M8.500.5l-8 8" stroke="#999" strokeWidth="1.200" /></Svg></button>
            </PlayerButtons>
        </PlayerTitle>
        <Video />
        <SeekRow>
            <Slider type="range" value="31" readOnly $rest="#333" aria-label="재생 위치" />
            <Svg w={11} h={10} color="#888"><path d="M0 3h3l4-3v10L3 7H0z" /><path d="M8.500 3v4M10.500 2v6" stroke="#888" /></Svg>
            <Slider type="range" value="66" readOnly $rest="#000" $w={70} aria-label="음량" />
        </SeekRow>
        <Controls>
            <ControlButton aria-label="일시정지"><Svg w={8} h={10} color="#eee"><path d="M0 0h3v10H0zM5 0h3v10H5z" /></Svg></ControlButton>
            <ControlButton aria-label="정지"><Svg w={8} h={8} color="#eee"><path d="M0 0h8v8H0z" /></Svg></ControlButton>
            <ControlButton aria-label="이전"><Svg w={8} h={8} color="#eee"><path d="M0 0h2v3.500L8 0v8L2 4.500V8H0z" /></Svg></ControlButton>
            <ControlButton aria-label="다음"><Svg w={8} h={8} color="#eee"><path d="M8 0H6v3.500L0 0v8l6-3.500V8h2z" /></Svg></ControlButton>
            <ControlButton aria-label="열기"><Svg w={8} h={8} color="#eee"><path d="M4 0l4 5H0zM0 6.500h8V8H0z" /></Svg></ControlButton>
            <PlayTime>
                00:00:09 <span>/</span> <span>00:00:31</span>
                <small>S/W</small><small>AVC1</small><small>AAC</small>
            </PlayTime>
            <ExtraTools>
                <svg width="20" height="16" viewBox="0 0 20 16" fill="#888" aria-hidden="true">
                    <text x="1" y="9" fontSize="9" fontWeight="700" fontFamily="Roboto">360˚</text>
                    <path d="M.5 10.500c1 2 4 2.500 7 2.500M19.500 10.500c-1 2-3.500 2.500-6 2.500" fill="none" stroke="#888" strokeWidth="1.200" />
                    <path d="M7.500 10.500l3.500 2.500-3.500 2.500z" />
                </svg>
                <svg width="14" height="14" viewBox="0 0 14 14" fill="#888" aria-hidden="true">
                    <text x="0" y="9" fontSize="11" fontWeight="700" fontFamily="Roboto">3D</text>
                    <path d="M0 12h14v1H0z" />
                </svg>
                <Svg w={16} h={14} color="#888">
                    <path d="M0 1h11v1H0zM0 4h5v1H0zM0 7h4v1H0zM0 10h5v1H0z" />
                    <circle cx="10" cy="7" r="3.200" fill="none" stroke="#888" strokeWidth="1.600" />
                    <path d="M12 9.500l3.500 3.500" stroke="#888" strokeWidth="2" />
                </Svg>
                <Svg w={12} h={13} color="#888">
                    <rect width="12" height="13" rx="2" /><path d="M3 4h6v1H3zm0 2.500h6v1H3zM3 9h6v1H3z" fill="#121212" />
                </Svg>
                <Svg w={14} h={14} color="#888">
                    <path d="M7 0v14M0 7h14M2 2l10 10M12 2 2 12" stroke="#888" strokeWidth="2.400" />
                    <circle cx="7" cy="7" r="4.800" /><circle cx="7" cy="7" r="1.800" fill="#121212" />
                </Svg>
            </ExtraTools>
            <MenuButton aria-label="메뉴"><Svg w={12} h={10}><path d="M0 0h12v1H0zm0 4h12v1H0zm0 4h12v1H0z" fill="#eee" /></Svg></MenuButton>
        </Controls>
    </PlayerWindow>
)

export default function App() {
    return (
        <>
            <GlobalStyle />
            <Shell>
                <TitleArea>
                    <TitleRow>
                        <AppTitle>
                            <PrBadge>Pr</PrBadge>
                            Adobe Premiere Pro 2022 - D:₩제부항 궁평항₩편집₩Adobe Premiere Pro Auto-Save₩제부항궁평항-2022-07-23_19-04-32 *
                        </AppTitle>
                        <WindowButtons>
                            <button aria-label="최소화"><MinIcon /></button>
                            <button aria-label="이전 크기로"><RestoreIcon /></button>
                            <button aria-label="닫기"><CloseIcon /></button>
                        </WindowButtons>
                    </TitleRow>
                    <MenuBar>
                        {menus.map(([label, key]) => <span key={key}>{label}(<u>{key}</u>)</span>)}
                    </MenuBar>
                </TitleArea>
                <HeaderBar>
                    <ModeTabs>
                        <HomeButton aria-label="홈"><HomeIcon /></HomeButton>
                        <ModeTab>가져오기</ModeTab>
                        <ModeTab $on>편집</ModeTab>
                        <ModeTab>내보내기</ModeTab>
                    </ModeTabs>
                    <DocName>제부항궁평항-2022-07-23_19-04-32 <span>- 편집됨</span></DocName>
                    <HeaderTools>
                        <button aria-label="작업 영역"><WorkspaceIcon /></button>
                        <button aria-label="빠른 내보내기"><ShareIcon /></button>
                        <button aria-label="전체 화면"><FullIcon /></button>
                    </HeaderTools>
                </HeaderBar>
                <Work>
                    <TopRow>
                        <ProjectPanel />
                        <ProgramPanel />
                    </TopRow>
                    <BottomRow>
                        <TimelinePanel />
                        <ToolsPanel />
                        <Meters />
                    </BottomRow>
                </Work>
                <StatusBar>
                    <div>
                        <Svg w={16} h={14}>
                            <path fillRule="evenodd" d="M6 2a5 5 0 0 1 9 2 5 5 0 0 1-4 9H5A5 5 0 0 1 6 2z" />
                            <path d="M4 10a2.500 2.500 0 1 1 2-4l4 4a2.500 2.500 0 1 0 1-4" fill="none" stroke="#1b1b1b" strokeWidth="1.200" />
                        </Svg>
                        클릭하여 선택하거나 빈 공간을 클릭하고 선택 윤곽으로 드래그합니다. 다른 옵션을 사용하려면 Shift, Alt 및 Ctrl 키를 사용하십시오.
                    </div>
                    <Svg w={15} h={15}>
                        <circle cx="7.500" cy="7.500" r="6.500" fill="none" stroke="#b0b0b0" strokeWidth="1.300" />
                        <path d="M6.500 3.500h2v2h-2zM5.500 6.500h3V11h1v1h-4v-1h1V7.500h-1z" />
                    </Svg>
                </StatusBar>
                <Explorer />
                <Player />
                <Subtitle>오류 영상</Subtitle>
                <TaskbarPeek />
            </Shell>
        </>
    )
}
